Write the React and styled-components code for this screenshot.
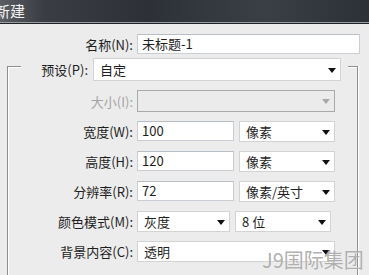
import React from 'react';
import styled, { createGlobalStyle } from 'styled-components';

const Global = createGlobalStyle`
  html, body {
    margin: 0;
    padding: 0;
    background: #ececec;
    overflow: hidden;
  }
  body {
    font-family: "Noto Sans CJK SC", "Noto Sans", sans-serif;
    font-size: 13px;
    color: #1e1e1e;
  }
`;

const Window = styled.div`
  position: relative;
  width: 369px;
  height: 275px;
  background: #ececec;
  overflow: hidden;
`;

const TitleBar = styled.div`
  height: 22px;
  background: linear-gradient(90deg, #5b5f64 0, #3a3e44 12%, #2d3137 40%, #3a3f46 72%, #2c3137 100%);
  border-bottom: 1px solid #9a9da0;
  box-shadow: 0 1px 0 #1f2226;
  display: flex;
  align-items: center;
`;

const Title = styled.span`
  color: #f2f2f2;
  font-size: 15px;
  margin-left: -5px;
  line-height: 22px;
`;

const Content = styled.div`
  padding: 11px 0 0 7px;
`;

const Row = styled.div`
  display: flex;
  align-items: center;
  gap: 4px;
  height: ${p => p.$h || 21}px;
`;

const Label = styled.div`
  width: ${p => (p.$w ? `${p.$w}px` : 'auto')};
  text-align: right;
  white-space: nowrap;
  color: ${p => (p.$disabled ? '#a4a4a4' : '#1e1e1e')};
`;

const TextBox = styled.div`
  box-sizing: border-box;
  width: ${p => p.$w}px;
  height: ${p => p.$h || 20}px;
  background: #fff;
  border: 1px solid #c9ced5;
  border-top-color: #b9bfc7;
  padding-left: 4px;
  line-height: ${p => (p.$h || 20) - 2}px;
  white-space: nowrap;
  overflow: hidden;
`;

const SelectBox = styled.div`
  position: relative;
  box-sizing: border-box;
  width: ${p => p.$w}px;
  height: ${p => p.$h || 21}px;
  background: ${p => (p.$disabled ? '#ebebeb' : '#fff')};
  border: 1px solid ${p => (p.$disabled ? '#a9a9a9' : '#d3d3d3')};
  padding-left: 6px;
  line-height: ${p => (p.$h || 21) - 2}px;
  white-space: nowrap;

  &::after {
    content: '';
    position: absolute;
    right: 4px;
    top: 50%;
    margin-top: -2px;
    border-left: 4px solid transparent;
    border-right: 4px solid transparent;
    border-top: 5px solid ${p => (p.$disabled ? '#a8a8a8' : '#111')};
  }
`;

const Pair = styled.div`
  display: flex;
  gap: 5px;
`;

const Group = styled.div`
  width: 351px;
  margin-top: 4px;
`;

const GroupHead = styled.div`
  display: flex;
  align-items: flex-end;
  height: 23px;
`;

const CornerLeft = styled.div`
  box-sizing: border-box;
  width: 14px;
  height: 15px;
  border-top: 1px solid #8e8e8e;
  border-left: 1px solid #8e8e8e;
  box-shadow: inset 1px 1px 0 #fff;
`;

const CornerRight = styled.div`
  box-sizing: border-box;
  width: 10px;
  height: 15px;
  border-top: 1px solid #8e8e8e;
  border-right: 1px solid #8e8e8e;
  box-shadow: inset 0 1px 0 #fff, 1px 0 0 #fff;
`;

const Legend = styled.div`
  flex: 1;
  align-self: stretch;
  display: flex;
  align-items: center;
  justify-content: flex-end;
  gap: 5px;
  padding-right: 7px;
`;

const GroupBody = styled.div`
  border-left: 1px solid #8e8e8e;
  border-right: 1px solid #8e8e8e;
  box-shadow: inset 1px 0 0 #fff, 1px 0 0 #fff;
  padding-top: 9px;
  padding-bottom: 20px;
  display: flex;
  flex-direction: column;
  gap: 9px;
`;

const Watermark = styled.div`
  position: absolute;
  left: 262px;
  top: 245px;
  font-size: 20px;
  color: rgba(150, 150, 150, 0.75);
  text-shadow: 0 0 1px rgba(255, 255, 255, 0.9);
  white-space: nowrap;
  pointer-events: none;
`;

const fields = [
  { label: '宽度(W):', value: '100', unit: '像素' },
  { label: '高度(H):', value: '120', unit: '像素' },
  { label: '分辨率(R):', value: '72', unit: '像素/英寸' },
];

export default function App() {
  return (
    <Window>
      <Global />
      <TitleBar>
        <Title>新建</Title>
      </TitleBar>
      <Content>
        <Row $h={20}>
          <Label $w={126}>名称(N):</Label>
          <TextBox $w={223}>未标题-1</TextBox>
        </Row>
        <Group>
          <GroupHead>
            <CornerLeft />
            <Legend>
              <Label>预设(P):</Label>
              <SelectBox $w={248} $h={23}>自定</SelectBox>
            </Legend>
            <CornerRight />
          </GroupHead>
          <GroupBody>
            <Row $h={22}>
              <Label $w={125} $disabled>大小(I):</Label>
              <SelectBox $w={198} $h={22} $disabled />
            </Row>
            {fields.map(f => (
              <Row key={f.label}>
                <Label $w={125}>{f.label}</Label>
                <Pair>
                  <TextBox $w={97} $h={20}>{f.value}</TextBox>
                  <SelectBox $w={96}>{f.unit}</SelectBox>
                </Pair>
              </Row>
            ))}
            <Row>
              <Label $w={125}>颜色模式(M):</Label>
              <Pair>
                <SelectBox $w={93}>灰度</SelectBox>
                <SelectBox $w={96}>8 位</SelectBox>
              </Pair>
            </Row>
            <Row>
              <Label $w={125}>背景内容(C):</Label>
              <SelectBox $w={198}>透明</SelectBox>
            </Row>
          </GroupBody>
        </Group>
      </Content>
      <Watermark>J9国际集团</Watermark>
    </Window>
  );
}
